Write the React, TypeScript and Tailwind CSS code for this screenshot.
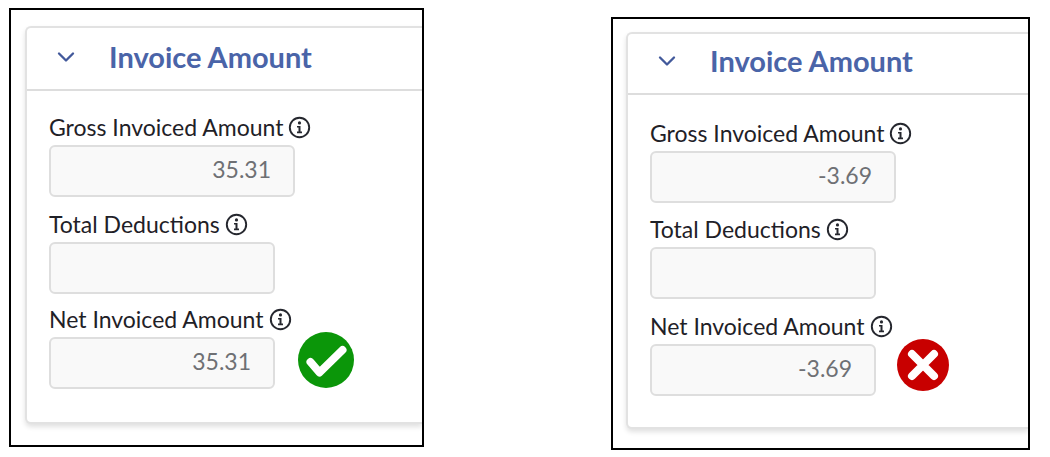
import { ChevronDown } from 'lucide-react';

function InfoIcon() {
  return (
    <svg width="23" height="23" viewBox="0 0 23 23" className="shrink-0">
      <circle cx="11.5" cy="11.5" r="9.7" fill="none" stroke="#25272e" strokeWidth="1.9" />
      <circle cx="11.5" cy="6.9" r="1.6" fill="#25272e" />
      <path d="M9 10h3.5v5.6H14v1.6H9v-1.6h1.5v-4.1H9z" fill="#25272e" />
    </svg>
  );
}

function Field({ label, value, wide, gap, children }: { label: string; value?: string; wide?: boolean; gap: string; children?: React.ReactNode }) {
  return (
    <div className={gap}>
      <div className="flex items-center gap-[5px] h-[30px] text-[23px] leading-[30px] text-[#1f2127]">
        {label} <InfoIcon />
      </div>
      <div className="flex items-center gap-[22px] mt-[3px]">
        <div className={`h-[52px] ${wide ? 'w-[246px]' : 'w-[226px]'} flex items-center justify-end pr-[22px] pb-[3px] bg-[#f9f9f9] border-2 border-[#dedede] rounded-[6px] text-[23px] text-[#6e7074]`}>
          {value}
        </div>
        {children}
      </div>
    </div>
  );
}

function Panel({ className, amount, header, body, gap1, gap2, children }: { className: string; amount: string; header: string; body: string; gap1: string; gap2: string; children: React.ReactNode }) {
  return (
    <div className={`border-2 border-black bg-white overflow-hidden shrink-0 ${className}`}>
      <div className="border-2 border-r-0 border-[#e2e2e2] rounded-l-[6px] shadow-[0_3px_5px_rgba(0,0,0,0.12)] bg-white">
        <div className={`flex items-center border-b-2 border-[#dddddd] pl-[25px] ${header}`}>
          <ChevronDown size={28} strokeWidth={2} className="text-[#42599b]" />
          <span className="ml-[29px] text-[29px] font-bold text-[#4a64a8]">Invoice Amount</span>
        </div>
        <div className={body}>
          <Field label="Gross Invoiced Amount" value={amount} wide gap="" />
          <Field label="Total Deductions" gap={gap1} />
          <Field label="Net Invoiced Amount" value={amount} gap={gap2}>
            {children}
          </Field>
        </div>
      </div>
    </div>
  );
}

export default function App() {
  return (
    <div className="w-[1050px] h-[457px] bg-white flex items-start overflow-hidden font-['Lato',sans-serif]">
      <Panel
        className="ml-[9px] mt-[8px] w-[415px] h-[439px] pt-[16px] pl-[14px]"
        amount="35.31"
        header="h-[63px] pb-[3px]"
        body="pl-[22px] pt-[21px] pb-[33px]"
        gap1="mt-[12px]"
        gap2="mt-[10px]"
      >
        <svg width="58" height="58" viewBox="0 0 58 58" className="-mt-[6px] shrink-0">
          <circle cx="29" cy="29" r="28" fill="#0b9609" />
          <path d="M13.5 31l9 10.5L45.5 19" fill="none" stroke="#fff" strokeWidth="8" strokeLinecap="round" strokeLinejoin="round" />
        </svg>
      </Panel>
      <Panel
        className="ml-[187px] mt-[17px] w-[419px] h-[433px] pt-[13px] pl-[13px]"
        amount="-3.69"
        header="h-[61px] pb-[5px]"
        body="pl-[22px] pt-[23px] pb-[31px]"
        gap1="mt-[11px]"
        gap2="mt-[12px]"
      >
        <svg width="52" height="52" viewBox="0 0 52 52" className="-mt-[10px] -ml-px shrink-0">
          <circle cx="26" cy="26" r="26" fill="#c80000" />
          <path d="M15 15l22 22M37 15l-22 22" fill="none" stroke="#fff" strokeWidth="8" strokeLinecap="round" />
        </svg>
      </Panel>
    </div>
  );
}
